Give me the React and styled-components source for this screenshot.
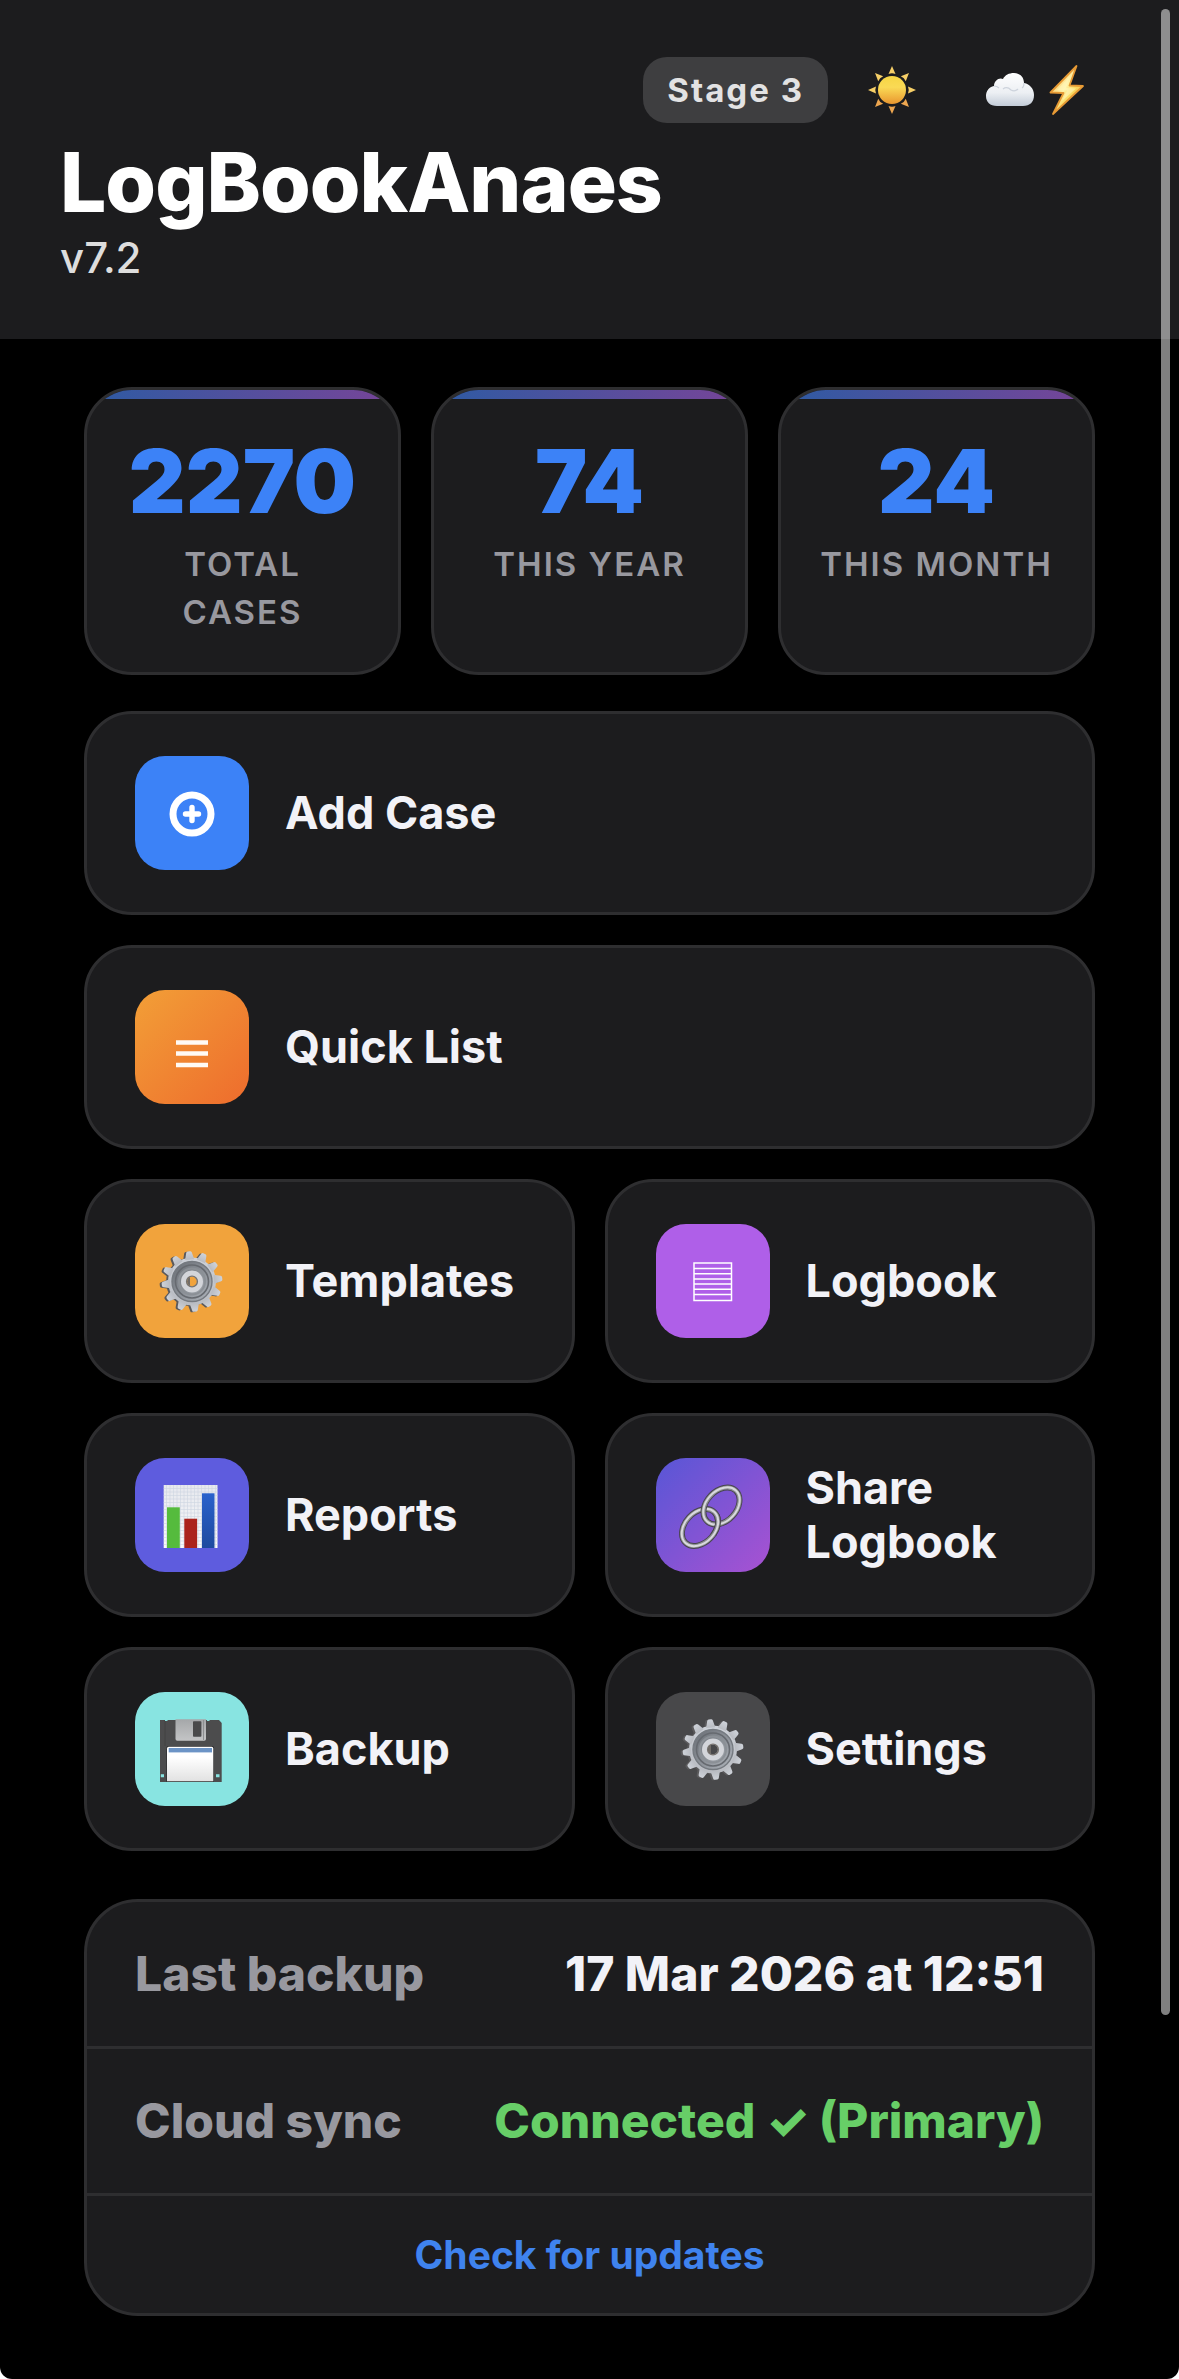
import React from "react"
import styled, { createGlobalStyle } from "styled-components"

const GlobalStyle = createGlobalStyle`
  * {
    box-sizing: border-box;
  }

  html {
    background-color: #fff;
  }

  body {
    margin: 0;
    font-family: Inter, "Liberation Sans", sans-serif;
    color: #f2f2f7;
  }

  h1, p, dl, dt, dd {
    margin: 0;
  }

  button {
    font-family: inherit;
    cursor: pointer;
  }
`

const SunIcon = () => (
  <svg width="48" height="48" viewBox="0 0 48 48" aria-hidden="true">
    <defs>
      <linearGradient id="sunFill" x1="0" y1="0" x2="0" y2="1">
        <stop offset="0" stopColor="#f6d544" />
        <stop offset="0.4" stopColor="#fada55" />
        <stop offset="1" stopColor="#e9962f" />
      </linearGradient>
    </defs>
    {[0, 45, 90, 135, 180, 225, 270, 315].map(angle => (
      <path
        key={angle}
        d="M24 0 L27.5 8 Q24 6.5 20.5 8 Z"
        fill={angle > 90 && angle < 270 ? "#eda650" : "#f6cf68"}
        transform={`rotate(${angle} 24 24)`}
      />
    ))}
    <circle cx="24" cy="24" r="14" fill="url(#sunFill)" />
  </svg>
)

const CloudIcon = () => (
  <svg width="48" height="48" viewBox="0 0 48 48" aria-hidden="true">
    <defs>
      <linearGradient id="cloudFill" x1="0" y1="0" x2="0" y2="1">
        <stop offset="0" stopColor="#fff" />
        <stop offset="0.6" stopColor="#eceff3" />
        <stop offset="1" stopColor="#c3ccd8" />
      </linearGradient>
    </defs>
    <path
      d="M11 40 C4 40 0 36 0 30 C0 25 3 21 8 20 C8 15 13 11 17 13 C19 9 23 7 28 7 C34 7 38 11 38 17 C44 18 48 23 48 29 C48 36 44 40 37 40 Z"
      fill="url(#cloudFill)"
    />
    <path d="M8 20 Q11 20 13 22 M17 23 Q21 20 25 24 Q29 26 32 23 M38 17 Q38 21 36 22" fill="none" stroke="#cdd3dc" strokeWidth="1.2" />
  </svg>
)

const BoltIcon = () => (
  <svg width="36" height="50" viewBox="0 0 36 50" aria-hidden="true">
    <defs>
      <linearGradient id="boltFill" x1="0" y1="0" x2="1" y2="1">
        <stop offset="0" stopColor="#f3a93b" />
        <stop offset="0.45" stopColor="#fff3a8" />
        <stop offset="0.6" stopColor="#fbdc62" />
        <stop offset="1" stopColor="#e8912d" />
      </linearGradient>
    </defs>
    <path
      d="M27.5 1 L1.5 27.5 L14.5 28 L4 49 L34 21 L20.5 20.5 Z"
      fill="url(#boltFill)"
      stroke="#e79a35"
      strokeWidth="1.8"
      strokeLinejoin="round"
    />
    <path d="M21 11 L8 25 L18 25.5 L13 36 L27 23.5 L17 23 Z" fill="#fff6bd" opacity="0.6" />
  </svg>
)

const PlusIcon = () => (
  <TileSvg viewBox="0 0 114 114" aria-hidden="true">
    <circle cx="57" cy="58" r="19" fill="none" stroke="#fff" strokeWidth="7" />
    <path d="M57 51.5 V64.5 M50.5 58 H63.5" stroke="#fff" strokeWidth="5.4" strokeLinecap="round" />
  </TileSvg>
)

const ListIcon = () => (
  <TileSvg viewBox="0 0 114 114" aria-hidden="true">
    <path d="M41 52.5 H73 M41 63.5 H73 M41 75 H73" stroke="#fffaf5" strokeWidth="4.4" />
  </TileSvg>
)

const LinedPageIcon = () => (
  <TileSvg viewBox="0 0 114 114" aria-hidden="true">
    <rect x="38" y="39" width="37.5" height="37.5" fill="none" stroke="#fff" strokeWidth="1.5" />
    <path
      d="M38 44.5 H75.5 M38 49.7 H75.5 M38 54.9 H75.5 M38 60.1 H75.5 M38 65.3 H75.5 M38 70.5 H75.5"
      stroke="#fff"
      strokeWidth="1.5"
    />
  </TileSvg>
)

const gearTeeth = Array.from({ length: 12 }, (_, i) => -6 + i * 30)
const ringPath = "M-24 0 A24 24 0 1 0 24 0 A24 24 0 1 0 -24 0 Z M-19 0 A19 19 0 1 1 19 0 A19 19 0 1 1 -19 0 Z"

const GearShape = ({ fill }) => (
  <g fill={fill}>
    <path d={ringPath} fillRule="evenodd" />
    {gearTeeth.map(angle => (
      <path key={angle} d="M-4.6 -22 L-2.8 -29 Q-2.4 -30.4 -1.2 -30.4 H1.2 Q2.4 -30.4 2.8 -29 L4.6 -22 Z" transform={`rotate(${angle})`} />
    ))}
  </g>
)

const GearIcon = ({ id }) => (
  <TileSvg viewBox="0 0 114 114" aria-hidden="true">
    <defs>
      <linearGradient id={`${id}Face`} x1="0" y1="0" x2="0" y2="1">
        <stop offset="0" stopColor="#ced2d9" />
        <stop offset="1" stopColor="#b9bcc2" />
      </linearGradient>
      <linearGradient id={`${id}Bowl`} x1="0" y1="0" x2="1" y2="1">
        <stop offset="0" stopColor="#72777e" />
        <stop offset="1" stopColor="#a5aab1" />
      </linearGradient>
    </defs>
    <g transform="translate(55 58)">
      <GearShape fill="#5b5a5c" />
    </g>
    <g transform="translate(57 57.5)">
      <GearShape fill={`url(#${id}Face)`} />
      <circle r="14" fill="none" stroke={`url(#${id}Bowl)`} strokeWidth="12" />
      <circle r="20" fill="none" stroke="#757a80" strokeWidth="1.4" />
      <circle r="16.5" fill="none" stroke="#666a70" strokeWidth="1.6" />
      <circle r="13" fill="none" stroke="#8b9096" strokeWidth="2" />
      <circle r="8" fill="none" stroke="#d3d5da" strokeWidth="6" />
      <circle r="5.4" fill="none" stroke="#77736f" strokeWidth="1.4" />
      <path d="M-2 -4.5 A5 5 0 0 0 -2 4.5 Z" fill="#716c67" />
    </g>
  </TileSvg>
)

const ChartIcon = () => (
  <TileSvg viewBox="0 0 114 114" aria-hidden="true">
    <defs>
      <linearGradient id="paper" x1="0" y1="0" x2="0" y2="1">
        <stop offset="0" stopColor="#e6e8ee" />
        <stop offset="1" stopColor="#fafafa" />
      </linearGradient>
      <linearGradient id="blueBar" x1="0" y1="0" x2="0" y2="1">
        <stop offset="0" stopColor="#2a62cc" />
        <stop offset="1" stopColor="#1e4a9f" />
      </linearGradient>
    </defs>
    <rect x="28.7" y="27" width="53.8" height="63" fill="url(#paper)" />
    <path
      d={
        Array.from({ length: 15 }, (_, i) => `M${31.5 + i * 3.5} 27 V90 `).join("") +
        Array.from({ length: 17 }, (_, i) => `M28.7 ${30.5 + i * 3.5} H82.5 `).join("")
      }
      stroke="#cdd5e0"
      strokeWidth="0.6"
    />
    <rect x="32" y="49.3" width="12.8" height="40.7" fill="#55bb3d" />
    <rect x="49.3" y="60.7" width="12.8" height="29.3" fill="#ab231c" />
    <rect x="67" y="35.3" width="12.5" height="54.7" fill="url(#blueBar)" />
  </TileSvg>
)

const ChainRing = () => (
  <>
    <ellipse rx="21" ry="15" fill="none" stroke="#47454c" strokeWidth="5.8" />
    <ellipse rx="21" ry="15" fill="none" stroke="#8f9096" strokeWidth="4" />
    <ellipse rx="21.2" ry="15.2" fill="none" stroke="#d9dadd" strokeWidth="2" />
  </>
)

const LinkIcon = () => (
  <TileSvg viewBox="0 0 114 114" aria-hidden="true">
    <defs>
      <clipPath id="lowerCrossing">
        <rect x="54" y="56" width="20" height="22" />
      </clipPath>
    </defs>
    <g transform="translate(44 69.5) rotate(-47)">
      <ChainRing />
    </g>
    <g transform="translate(65.5 48) rotate(-47)">
      <ChainRing />
    </g>
    <g clipPath="url(#lowerCrossing)">
      <g transform="translate(44 69.5) rotate(-47)">
        <ChainRing />
      </g>
    </g>
  </TileSvg>
)

const FloppyIcon = () => (
  <TileSvg viewBox="0 0 114 114" aria-hidden="true">
    <defs>
      <linearGradient id="shutter" x1="0" y1="0" x2="0" y2="1">
        <stop offset="0" stopColor="#a5a7a9" />
        <stop offset="1" stopColor="#c4c5c6" />
      </linearGradient>
      <linearGradient id="diskLabel" x1="0" y1="0" x2="0" y2="1">
        <stop offset="0.3" stopColor="#fff" />
        <stop offset="1" stopColor="#e2e2e2" />
      </linearGradient>
    </defs>
    <path d="M25 28 H84 L86.7 31 V90 H25 Z" fill="#4c4c4d" />
    <path d="M30 28 V54" stroke="#3f3f40" strokeWidth="0.8" />
    <path d="M30 28 H32.5 V29 H30 Z M72 28 H74.5 V29 H72 Z M25.8 82.3 H29 V85.3 H25.8 Z M81 82.3 H84.5 V85.3 H81 Z" fill="#88e4e1" />
    <path d="M40.5 27.3 H71 V47 Q71 48.8 69.2 48.8 H42.3 Q40.5 48.8 40.5 47 Z" fill="url(#shutter)" />
    <path d="M68.5 28 V48" stroke="#8d8f91" strokeWidth="1" />
    <rect x="58" y="29.3" width="8.4" height="15.4" rx="0.8" fill="#4a4a4b" />
    <path d="M31.3 90 V56 Q31.3 54 33.3 54 H77 Q79 54 79 56 V90 Z" fill="#303031" />
    <path d="M32 89.2 V56.5 Q32 54.8 33.7 54.8 H76.6 Q78.3 54.8 78.3 56.5 V89.2 Z" fill="url(#diskLabel)" />
    <rect x="33.7" y="56" width="43.3" height="4.4" fill="#6c94c6" />
  </TileSvg>
)

const stats = [
  { value: "2270", label: "Total Cases" },
  { value: "74", label: "This Year" },
  { value: "24", label: "This Month" },
]

const actions = [
  { label: "Add Case", background: "#3c82f7", icon: <PlusIcon />, wide: true },
  { label: "Quick List", background: "linear-gradient(135deg, #f29f37, #ee6c2d)", icon: <ListIcon />, wide: true },
  { label: "Templates", background: "#f1a33c", icon: <GearIcon id="templates" /> },
  { label: "Logbook", background: "#af5fe8", icon: <LinedPageIcon /> },
  { label: "Reports", background: "#5e5cde", icon: <ChartIcon /> },
  { label: "Share Logbook", background: "linear-gradient(135deg, #5856d6, #a852d2)", icon: <LinkIcon /> },
  { label: "Backup", background: "#88e4e1", icon: <FloppyIcon /> },
  { label: "Settings", background: "#48484a", icon: <GearIcon id="settings" /> },
]

const App = () => (
  <Page>
    <GlobalStyle />
    <Header>
      <HeaderTools>
        <StageBadge>Stage 3</StageBadge>
        <ToolButton type="button" aria-label="Toggle theme">
          <SunIcon />
        </ToolButton>
        <ToolButton type="button" aria-label="Cloud status">
          <CloudIcon />
          <BoltIcon />
        </ToolButton>
      </HeaderTools>
      <Title>LogBookAnaes</Title>
      <Version>v7.2</Version>
    </Header>
    <Main>
      <StatGrid>
        {stats.map(stat => (
          <StatCard key={stat.label}>
            <StatValue>{stat.value}</StatValue>
            <StatLabel>{stat.label}</StatLabel>
          </StatCard>
        ))}
      </StatGrid>
      <ActionGrid>
        {actions.map(action => (
          <ActionButton type="button" key={action.label} $wide={action.wide}>
            <IconTile $background={action.background}>{action.icon}</IconTile>
            <span>{action.label}</span>
          </ActionButton>
        ))}
      </ActionGrid>
      <StatusPanel>
        <dl>
          <StatusRow>
            <StatusName>Last backup</StatusName>
            <dd>17 Mar 2026 at 12:51</dd>
          </StatusRow>
          <StatusRow $connected>
            <StatusName>Cloud sync</StatusName>
            <dd>Connected ✓ (Primary)</dd>
          </StatusRow>
        </dl>
        <UpdateButton type="button">Check for updates</UpdateButton>
      </StatusPanel>
    </Main>
    <ScrollThumb />
  </Page>
)

const Page = styled.div`
  position: relative;
  min-height: 100vh;
  background-color: #000;
  border-radius: 0 0 12px 12px;
`

const Header = styled.header`
  padding: 57px 60px 56px;
  background-color: #1c1c1e;
`

const HeaderTools = styled.div`
  display: flex;
  justify-content: flex-end;
  align-items: center;
  padding-right: 34px;
`

const StageBadge = styled.span`
  margin-right: 40px;
  padding: 0 24px;
  border-radius: 24px;
  background-color: #3e3e40;
  color: #e2e2e3;
  font-size: 33px;
  font-weight: 700;
  line-height: 66px;
  letter-spacing: 2px;
`

const ToolButton = styled.button`
  display: flex;
  align-items: center;
  gap: 15px;
  padding: 0;
  border: none;
  background: none;

  & + & {
    margin-left: 70px;
  }
`

const Title = styled.h1`
  margin-top: 10px;
  color: #fff;
  font-size: 82px;
  font-weight: 800;
  line-height: 100px;
  letter-spacing: -1px;
`

const Version = styled.p`
  color: #dddddd;
  font-size: 42px;
  font-weight: 500;
  line-height: 50px;
`

const Main = styled.main`
  padding: 48px 84px 60px;
`

const StatGrid = styled.section`
  display: grid;
  grid-template-columns: repeat(3, 1fr);
  gap: 30px;
`

const StatCard = styled.div`
  position: relative;
  overflow: hidden;
  padding: 36px;
  border: 3px solid #2e2e30;
  border-radius: 48px;
  background-color: #1c1c1e;
  text-align: center;

  &::before {
    content: '';
    position: absolute;
    top: 0;
    left: 0;
    right: 0;
    height: 9px;
    background: linear-gradient(90deg, #2d5ba3, #784498);
  }
`

const StatValue = styled.p`
  color: #3c82f7;
  font-size: 88px;
  font-weight: 900;
  line-height: 110px;
`

const StatLabel = styled.p`
  margin-top: 4px;
  color: #98989f;
  font-size: 33px;
  font-weight: 600;
  line-height: 48px;
  letter-spacing: 2px;
  text-transform: uppercase;
`

const ActionGrid = styled.section`
  display: grid;
  grid-template-columns: repeat(2, 1fr);
  gap: 30px;
  margin-top: 36px;
`

const ActionButton = styled.button`
  display: flex;
  align-items: center;
  gap: 36px;
  grid-column: ${props => props.$wide ? "1 / -1" : "auto"};
  padding: 42px 48px;
  border: 3px solid #2e2e30;
  border-radius: 48px;
  background-color: #1c1c1e;
  color: #f2f2f7;
  font-size: 45px;
  font-weight: 700;
  line-height: 54px;
  text-align: left;
`

const IconTile = styled.span`
  flex-shrink: 0;
  width: 114px;
  height: 114px;
  border-radius: 30px;
  background: ${props => props.$background};
`

const TileSvg = styled.svg`
  display: block;
  width: 100%;
  height: 100%;
`

const StatusPanel = styled.section`
  overflow: hidden;
  margin-top: 48px;
  border: 3px solid #2e2e30;
  border-radius: 54px;
  background-color: #1c1c1e;
`

const StatusRow = styled.div`
  display: flex;
  justify-content: space-between;
  padding: 42px 48px;
  border-bottom: 3px solid #2e2e30;
  color: ${props => props.$connected ? "#67ce67" : "#f2f2f7"};
  font-size: 48px;
  font-weight: 800;
  line-height: 60px;
`

const StatusName = styled.dt`
  color: #98989f;
`

const UpdateButton = styled.button`
  display: block;
  width: 100%;
  padding: 0;
  border: none;
  background: none;
  color: #3f83ee;
  font-size: 39px;
  font-weight: 700;
  line-height: 117px;
`

const ScrollThumb = styled.div`
  position: fixed;
  top: 9px;
  right: 9px;
  bottom: 364px;
  width: 9px;
  border-radius: 5px;
  background-color: rgba(255, 255, 255, 0.5);
  pointer-events: none;
`

export default App
